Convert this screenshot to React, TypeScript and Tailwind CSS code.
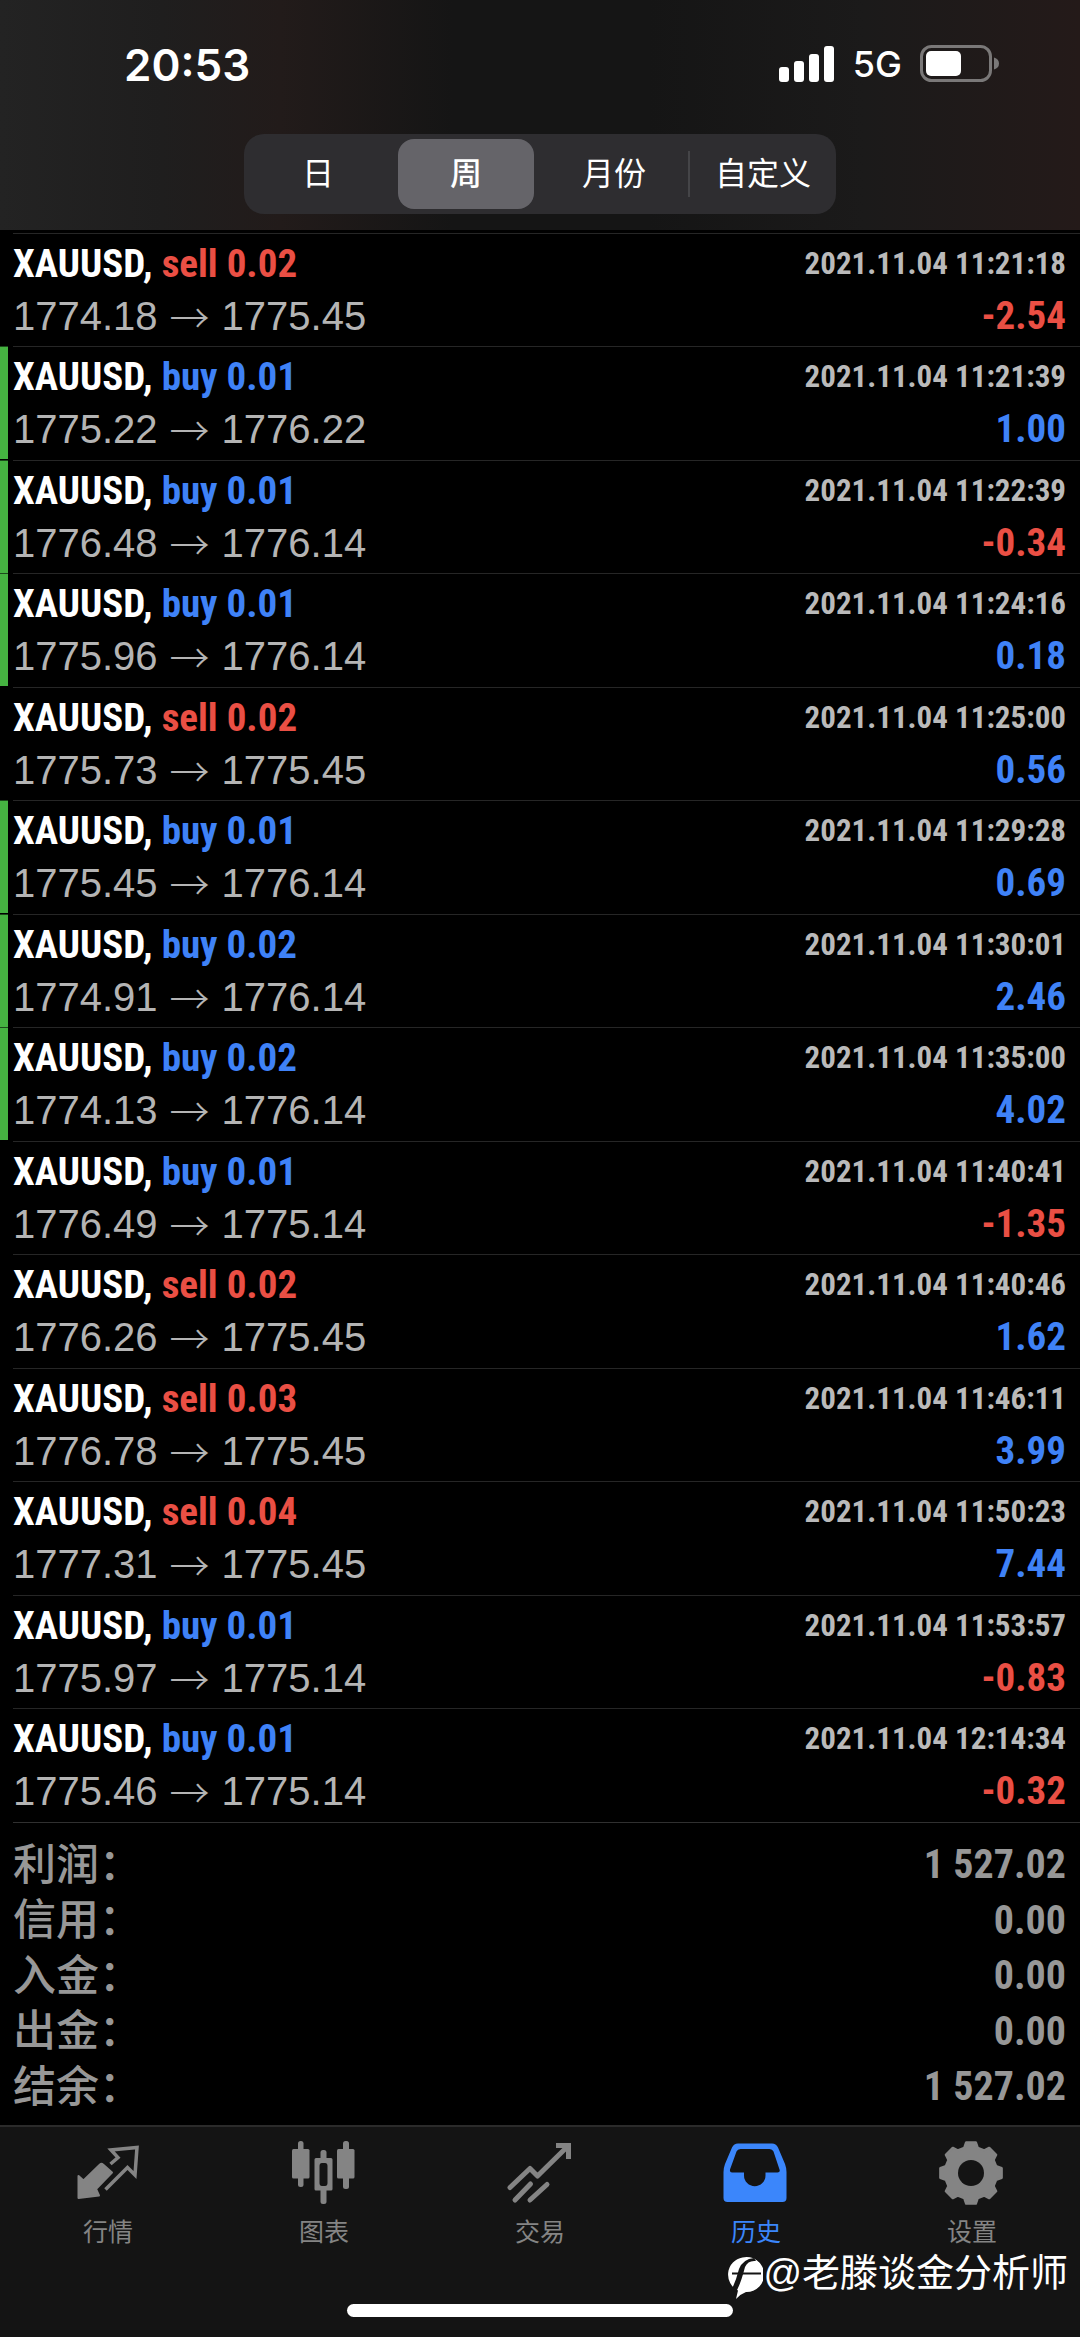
/**
 * Trade history screen: period switch, closed deals, totals, bottom tab bar.
 */
import type { ReactNode } from 'react'

type Trade = {
  side: 'buy' | 'sell'
  volume: string
  open: string
  close: string
  time: string
  profit: string
  /** closed by take profit, marked with a green edge */
  marked?: boolean
}

const TRADES: Trade[] = [
  { side: 'sell', volume: '0.02', open: '1774.18', close: '1775.45', time: '11:21:18', profit: '-2.54' },
  { side: 'buy', volume: '0.01', open: '1775.22', close: '1776.22', time: '11:21:39', profit: '1.00', marked: true },
  { side: 'buy', volume: '0.01', open: '1776.48', close: '1776.14', time: '11:22:39', profit: '-0.34', marked: true },
  { side: 'buy', volume: '0.01', open: '1775.96', close: '1776.14', time: '11:24:16', profit: '0.18', marked: true },
  { side: 'sell', volume: '0.02', open: '1775.73', close: '1775.45', time: '11:25:00', profit: '0.56' },
  { side: 'buy', volume: '0.01', open: '1775.45', close: '1776.14', time: '11:29:28', profit: '0.69', marked: true },
  { side: 'buy', volume: '0.02', open: '1774.91', close: '1776.14', time: '11:30:01', profit: '2.46', marked: true },
  { side: 'buy', volume: '0.02', open: '1774.13', close: '1776.14', time: '11:35:00', profit: '4.02', marked: true },
  { side: 'buy', volume: '0.01', open: '1776.49', close: '1775.14', time: '11:40:41', profit: '-1.35' },
  { side: 'sell', volume: '0.02', open: '1776.26', close: '1775.45', time: '11:40:46', profit: '1.62' },
  { side: 'sell', volume: '0.03', open: '1776.78', close: '1775.45', time: '11:46:11', profit: '3.99' },
  { side: 'sell', volume: '0.04', open: '1777.31', close: '1775.45', time: '11:50:23', profit: '7.44' },
  { side: 'buy', volume: '0.01', open: '1775.97', close: '1775.14', time: '11:53:57', profit: '-0.83' },
  { side: 'buy', volume: '0.01', open: '1775.46', close: '1775.14', time: '12:14:34', profit: '-0.32' },
]

const TOTALS = [
  ['利润', '1 527.02'],
  ['信用', '0.00'],
  ['入金', '0.00'],
  ['出金', '0.00'],
  ['结余', '1 527.02'],
]

const PERIODS = ['日', '周', '月份', '自定义']

const CONDENSED = "font-['Roboto_Condensed','Liberation_Sans_Narrow','Liberation_Sans',sans-serif] font-bold"
const CJK = "font-['Liberation_Sans','Noto_Sans_CJK_SC',sans-serif]"

// 8 teeth, four corners each: valley, tip, tip, valley
const gearPoints = Array.from({ length: 8 }, (_, i) =>
  [
    [-15, 26],
    [-9, 31],
    [9, 31],
    [15, 26],
  ]
    .map(([deg, r]) => {
      const a = ((i * 45 + deg) * Math.PI) / 180
      return `${(35 + r * Math.sin(a)).toFixed(1)},${(37 - r * Math.cos(a)).toFixed(1)}`
    })
    .join(' '),
).join(' ')

function Icon({ children }: { children: ReactNode }) {
  return (
    <svg viewBox="0 0 72 72" className="size-[72px]" fill="currentColor" aria-hidden="true">
      {children}
    </svg>
  )
}

const QuotesIcon = (
  <Icon>
    <path
      d="M6.500 40 11.500 44.500 28 28.500Q29.500 27 31 28.500L40 36.500 24 53 27 59.500 6.500 62Z"
      stroke="currentColor"
      strokeWidth="2"
      strokeLinejoin="round"
    />
    <path
      d="M38.500 28 46 21.500 39 14 65 11.500 63 39 55.500 31.500 33.500 53.500"
      fill="none"
      stroke="currentColor"
      strokeWidth="3.500"
    />
  </Icon>
)

const ChartIcon = (
  <Icon>
    <rect x="4" y="13" width="17.500" height="29.500" rx="1.500" />
    <rect x="10" y="5" width="5.500" height="46" rx="2.500" />
    <path
      fillRule="evenodd"
      d="M28 22H43Q44.500 22 44.500 23.500V53Q44.500 54.500 43 54.500H28Q26.500 54.500 26.500 53V23.500Q26.500 22 28 22ZM34 27Q31.500 27 31.500 30V47Q31.500 50 34 50H37Q39.500 50 39.500 47V30Q39.500 27 37 27Z"
    />
    <rect x="32.500" y="14" width="6" height="11" rx="2.500" />
    <rect x="32.500" y="52" width="6" height="16" rx="2.500" />
    <rect x="49" y="13" width="17.500" height="29.500" rx="1.500" />
    <rect x="55" y="5" width="6" height="48" rx="2.500" />
  </Icon>
)

const TradeIcon = (
  <Icon>
    <g fill="none" stroke="currentColor" strokeWidth="5">
      <path d="M6 51.500 26 32.500 33.500 40 63 11" strokeLinejoin="round" strokeLinecap="round" />
      <path d="M52 9.500H64.500V23" />
      <path d="M11 64 26.500 48M26 64 43 48.500" strokeLinecap="round" />
    </g>
  </Icon>
)

const HistoryIcon = (
  <Icon>
    <path
      fillRule="evenodd"
      d="M18 7.500H52Q56 7.500 58 11.500L65 28Q66.500 32 66.500 36V62Q66.500 66 62.500 66H7.500Q3.500 66 3.500 62V36Q3.500 32 5 28L12 11.500Q14 7.500 18 7.500ZM20.500 13Q17.500 13 16.500 15.500L10 33.500Q9.500 36.500 12 36.500H24V39.500A10.500 10.500 0 0 0 45.500 39.500V36.500H57.500Q60.500 36.500 59.500 33.500L53.500 15.500Q52.500 13 49.500 13Z"
    />
  </Icon>
)

const SettingsIcon = (
  <Icon>
    <mask id="gear-hole">
      <rect width="72" height="72" fill="white" />
      <circle cx="35" cy="37" r="13" fill="black" />
    </mask>
    <polygon
      points={gearPoints}
      mask="url(#gear-hole)"
      stroke="currentColor"
      strokeWidth="2.500"
      strokeLinejoin="round"
    />
  </Icon>
)

const TABS = [
  { label: '行情', icon: QuotesIcon },
  { label: '图表', icon: ChartIcon },
  { label: '交易', icon: TradeIcon },
  { label: '历史', icon: HistoryIcon, active: true },
  { label: '设置', icon: SettingsIcon },
]

function StatusBar() {
  return (
    <div className="flex h-[134px] items-start justify-between pt-[37px] pr-20 pl-[124px] font-['Inter',sans-serif] text-white">
      <span className="text-[44px] leading-[56px] font-semibold">20:53</span>
      <div className="flex h-[54px] items-center">
        <svg viewBox="0 0 56 36" className="h-9 w-14" fill="currentColor" aria-label="Signal">
          <rect x="0" y="21" width="10" height="15" rx="3" />
          <rect x="15" y="15" width="10" height="21" rx="3" />
          <rect x="30" y="8" width="10" height="28" rx="3" />
          <rect x="45" y="0" width="10" height="36" rx="3" />
        </svg>
        <span className="ml-[18px] text-[36px] leading-[54px] font-medium">5G</span>
        <svg viewBox="0 0 80 38" className="ml-[18px] h-[38px] w-20" aria-label="Battery">
          <rect x="1.500" y="1.500" width="69" height="34" rx="10" fill="none" stroke="#7a7878" strokeWidth="3" />
          <rect x="6" y="6" width="35" height="25" rx="5" fill="white" />
          <path d="M74 12.500Q79 14 79 18.500T74 24.500Z" fill="#7a7878" />
        </svg>
      </div>
    </div>
  )
}

function PeriodSwitch() {
  return (
    <div className="mx-auto grid h-20 w-[592px] max-w-full grid-cols-4 rounded-[20px] bg-[#2e2d30] py-[5px]">
      {PERIODS.map((label, i) => (
        <div key={label} className={`flex items-center ${i === 3 ? 'my-3 border-l-2 border-[#454548]' : 'px-[6px]'}`}>
          <button
            type="button"
            aria-pressed={i === 1}
            className={`${CJK} h-full w-full rounded-2xl text-[32px] leading-[46px] text-white ${
              i === 1 ? 'bg-[#656469] font-medium' : ''
            }`}
          >
            {label}
          </button>
        </div>
      ))}
    </div>
  )
}

function TradeRow({ trade }: { trade: Trade }) {
  const loss = trade.profit.startsWith('-')
  return (
    <li className="flex">
      <span className={`w-2 ${trade.marked ? 'border-t border-[#1c4a1b] bg-[#45b341]' : ''}`} />
      <div className="ml-[5px] flex flex-1 justify-between border-t border-[#262626] pt-1 pr-[14px] pb-1">
        <div>
          <p className={`${CONDENSED} text-[39px] leading-[52px] text-white`}>
            XAUUSD,{' '}
            <span className={trade.side === 'buy' ? 'text-[#3f82f7]' : 'text-[#ea4f44]'}>
              {trade.side} {trade.volume}
            </span>
          </p>
          <p className="flex items-center font-['Liberation_Sans',sans-serif] text-[40px] leading-[52px] text-[#b4b4b4]">
            {trade.open}
            <span className="mx-3 font-['Noto_Sans_CJK_SC',sans-serif] font-light">→</span>
            {trade.close}
          </p>
        </div>
        <div className={`${CONDENSED} text-right`}>
          <p className="text-[31px] leading-[52px] text-[#bababa]">2021.11.04 {trade.time}</p>
          <p className={`text-[39px] leading-[52px] ${loss ? 'text-[#ea4f44]' : 'text-[#3f82f7]'}`}>{trade.profit}</p>
        </div>
      </div>
    </li>
  )
}

function TabBar() {
  return (
    <nav className="relative flex flex-1 flex-col justify-between border-t-2 border-[#2b2b2b] bg-[#141414]" aria-label="Main">
      <div className="grid grid-cols-5 pt-[9px]">
        {TABS.map((tab) => (
          <a
            key={tab.label}
            href="#"
            className={`flex flex-col items-center ${tab.active ? 'text-[#3b86fb]' : 'text-[#848484]'}`}
          >
            {tab.icon}
            <span className={`${CJK} mt-[6px] text-[25px] leading-9`}>{tab.label}</span>
          </a>
        ))}
      </div>
      <div className="mx-auto mb-5 h-[13px] w-[386px] rounded-full bg-white" />

      {/* author signature over the bar */}
      <div className="absolute right-3 bottom-9 flex items-center text-white">
        <svg viewBox="0 -6 44 56" className="h-14 w-11" aria-hidden="true">
          <path d="M23.500 6.500A17.500 17.500 0 1 1 27 41Q21.500 43 17 48L19 39.500A17.500 17.500 0 0 1 23.500 6.500Z" fill="white" />
          <path d="M37 10Q29 9 26 16Q22 32 17 41L12 40Q17 30 20 18Q24 8 35 7Z" fill="#141414" />
          <path d="M13 22.500H42" stroke="#141414" strokeWidth="2" />
        </svg>
        <span className={`${CJK} text-[38px] leading-[56px]`}>@老滕谈金分析师</span>
      </div>
    </nav>
  )
}

export default function App() {
  return (
    <div className="flex min-h-screen flex-col bg-black">
      <header className="bg-[linear-gradient(90deg,#232323,#1f1e1e_15%,#221b1a_26%,#151515_42%,#151515_60%,#1b1a1a_80%,#241a19)] pb-4">
        <StatusBar />
        <PeriodSwitch />
      </header>

      <main className="pt-[3px]">
        <ul className="[&>li:nth-child(even)]:pb-px">
          {TRADES.map((trade) => (
            <TradeRow key={trade.time} trade={trade} />
          ))}
        </ul>
        <dl className="ml-[13px] border-t border-[#303030] pt-[14px] pr-[14px] pb-[10px] text-[#979797]">
          {TOTALS.map(([label, value]) => (
            <div key={label} className="flex justify-between leading-[56px] even:leading-[55px]">
              <dt className={`${CJK} text-[43px] font-medium`}>{label}：</dt>
              <dd className={`${CONDENSED} text-[40px]`}>{value}</dd>
            </div>
          ))}
        </dl>
      </main>

      <TabBar />
    </div>
  )
}
